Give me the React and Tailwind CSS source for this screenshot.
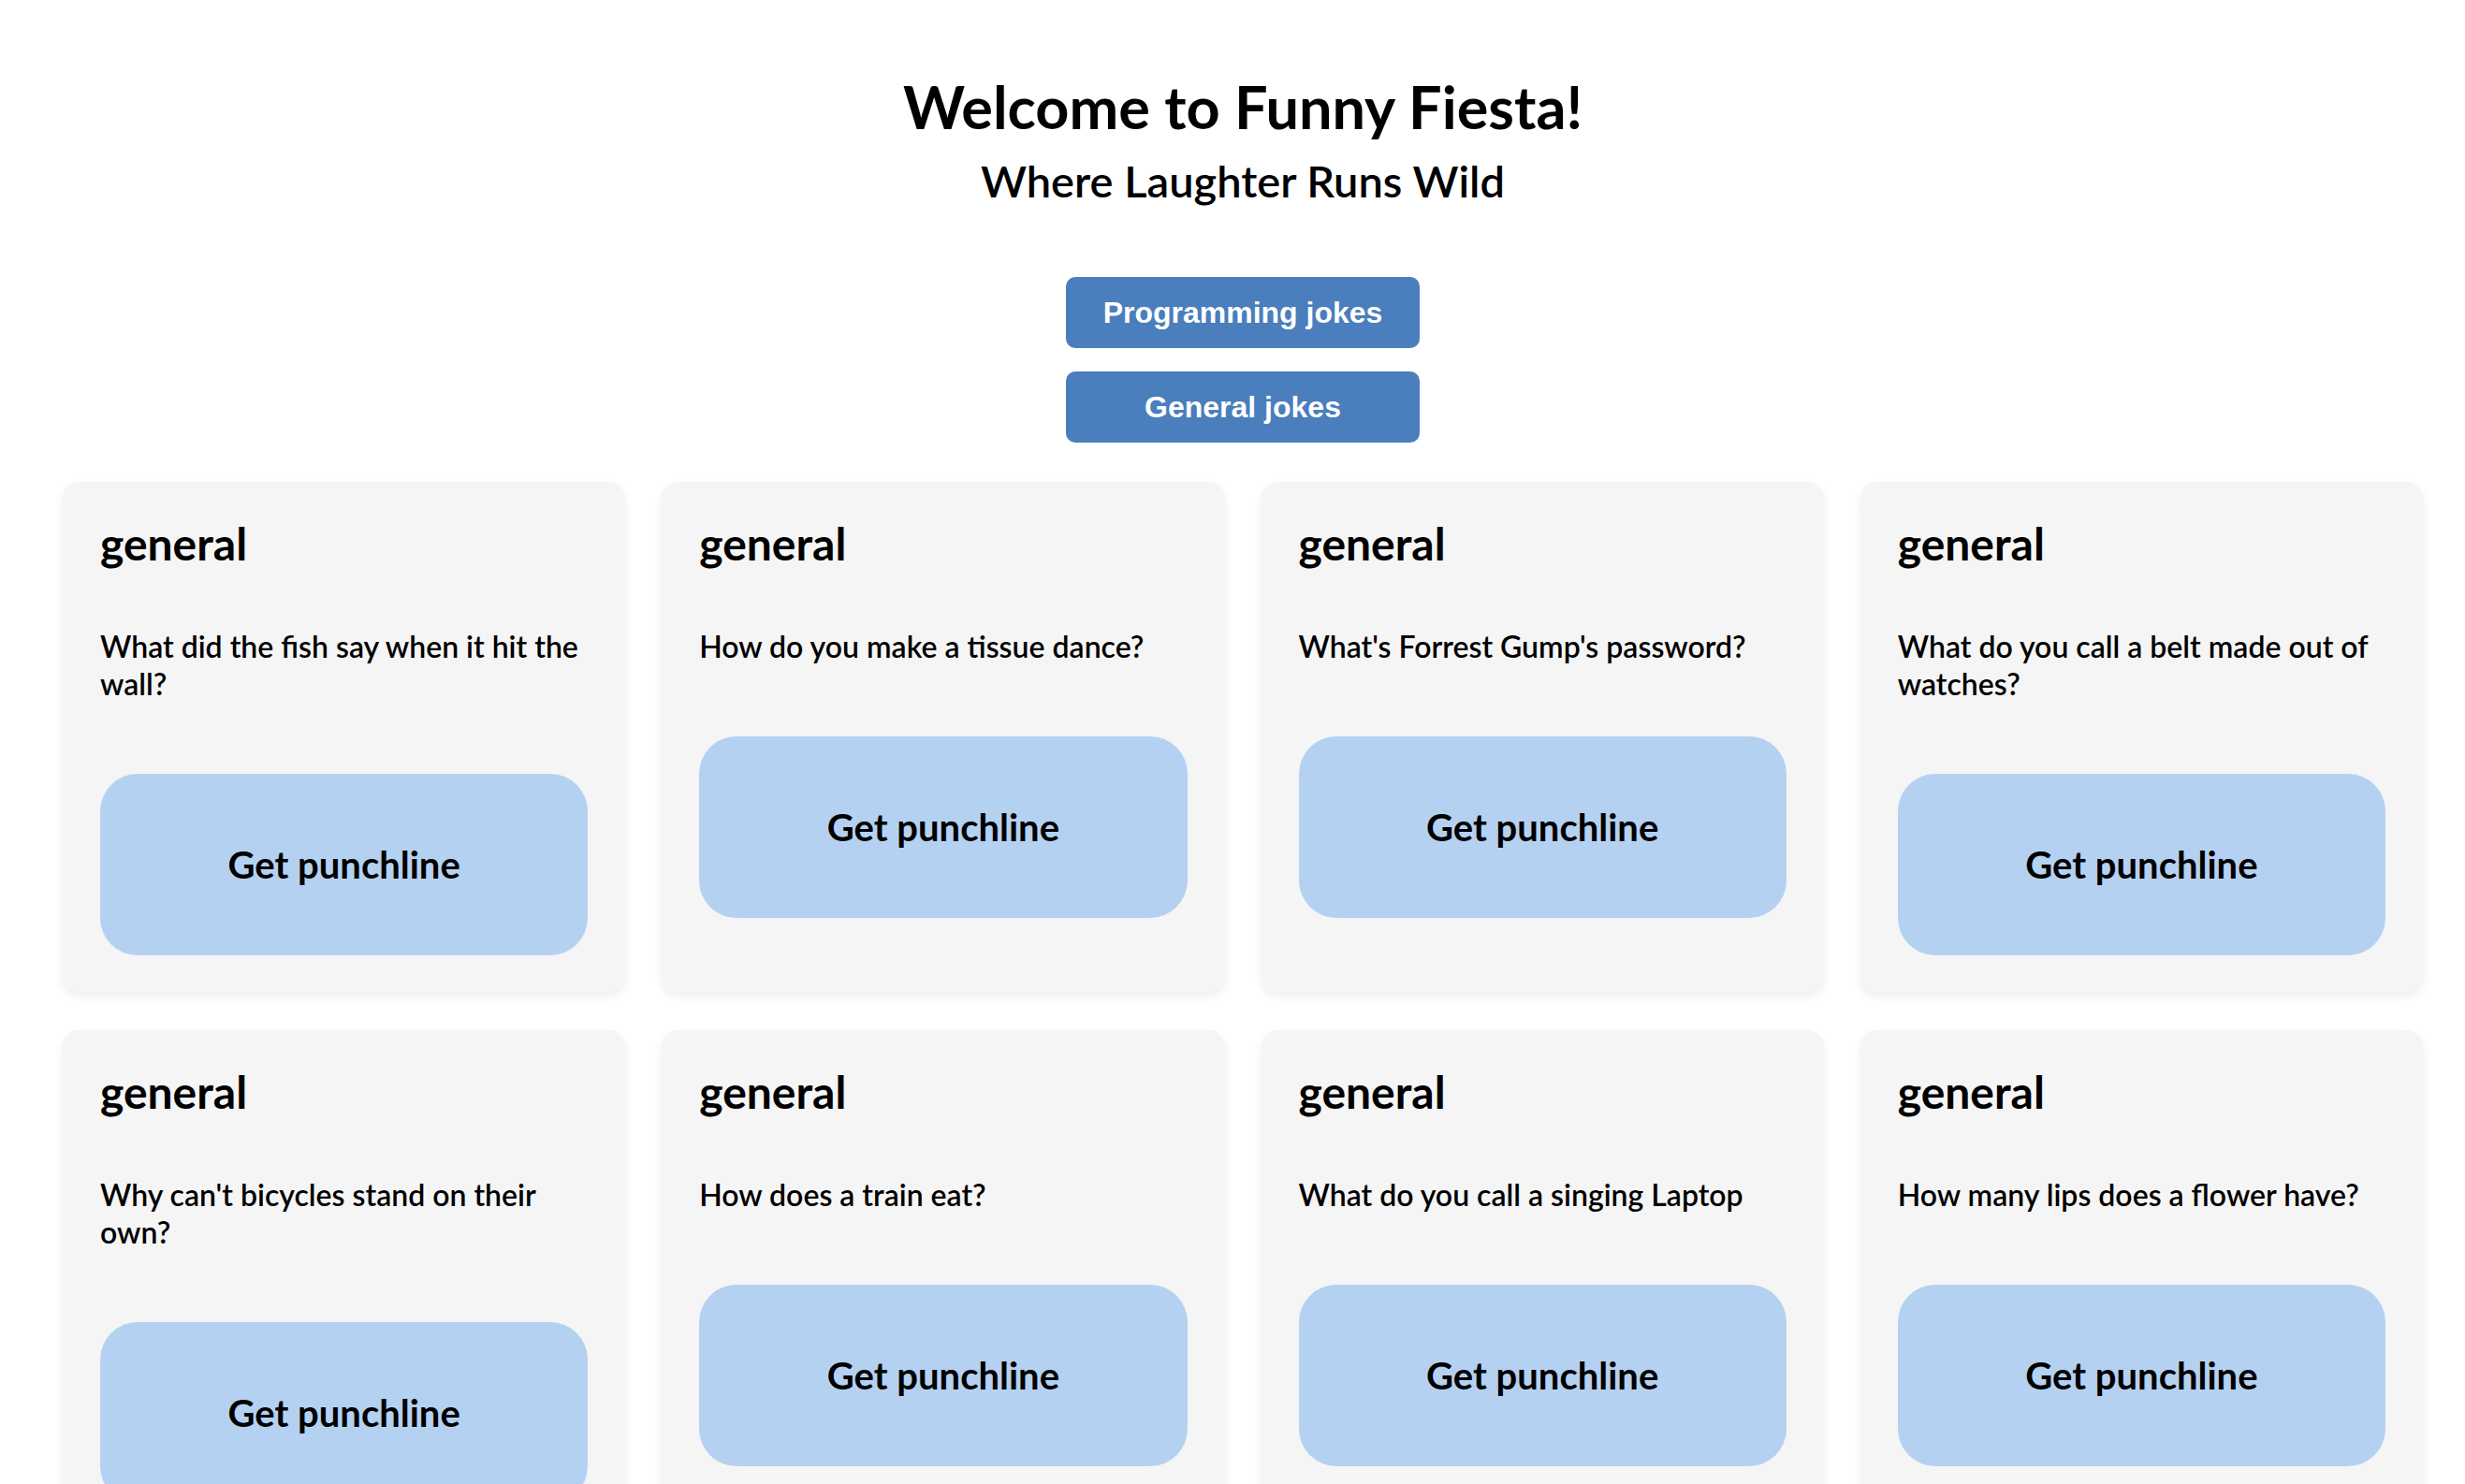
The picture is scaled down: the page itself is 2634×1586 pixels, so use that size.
import React from "react";

const jokes = [
    { id: 1, type: "general", setup: "What did the fish say when it hit the wall?" },
    { id: 2, type: "general", setup: "How do you make a tissue dance?" },
    { id: 3, type: "general", setup: "What's Forrest Gump's password?" },
    { id: 4, type: "general", setup: "What do you call a belt made out of watches?" },
    { id: 5, type: "general", setup: "Why can't bicycles stand on their own?" },
    { id: 6, type: "general", setup: "How does a train eat?" },
    { id: 7, type: "general", setup: "What do you call a singing Laptop" },
    { id: 8, type: "general", setup: "How many lips does a flower have?" },
];

const JokeCard = ({ joke }) => (
    <div className="flex flex-col items-start bg-[#f5f5f5] rounded-[18px] shadow-[0_4px_10px_rgba(0,0,0,0.07)] px-10 pt-10 pb-10">
        <h2 className="text-[48px] leading-[52px] font-bold text-black">
            {joke.type}
        </h2>
        <p className="mt-16 text-[32px] leading-[40px] font-semibold text-black">
            {joke.setup}
        </p>
        <button className="mt-[76px] w-full h-[194px] flex items-center justify-center rounded-[40px] bg-[#b5d1f1] text-[40px] font-bold text-black">
            Get punchline
        </button>
    </div>
);

export default function App() {
    return (
        <div className="min-h-screen bg-white pt-[76px] pb-10 pl-[22px] font-['Lato',sans-serif] text-black">
            <header className="flex flex-col items-center text-center">
                <h1 className="text-[63px] leading-[76px] font-bold">
                    Welcome to Funny Fiesta!
                </h1>
                <h2 className="mt-3 text-[47px] leading-[58px] font-semibold">
                    Where Laughter Runs Wild
                </h2>
                <div className="mt-[74px] flex flex-col gap-[25px]">
                    <button className="w-[378px] h-[76px] flex items-center justify-center rounded-[10px] bg-[#4a7ebc] text-white text-[32px] font-bold font-['Liberation_Sans',Arial,sans-serif]">
                        Programming jokes
                    </button>
                    <button className="w-[378px] h-[76px] flex items-center justify-center rounded-[10px] bg-[#4a7ebc] text-white text-[32px] font-bold font-['Liberation_Sans',Arial,sans-serif]">
                        General jokes
                    </button>
                </div>
            </header>

            <main className="mt-[42px] grid grid-cols-4 gap-x-[39px] gap-y-10 px-[45px]">
                {jokes.map((joke) => (
                    <JokeCard key={joke.id} joke={joke} />
                ))}
            </main>
        </div>
    );
}
